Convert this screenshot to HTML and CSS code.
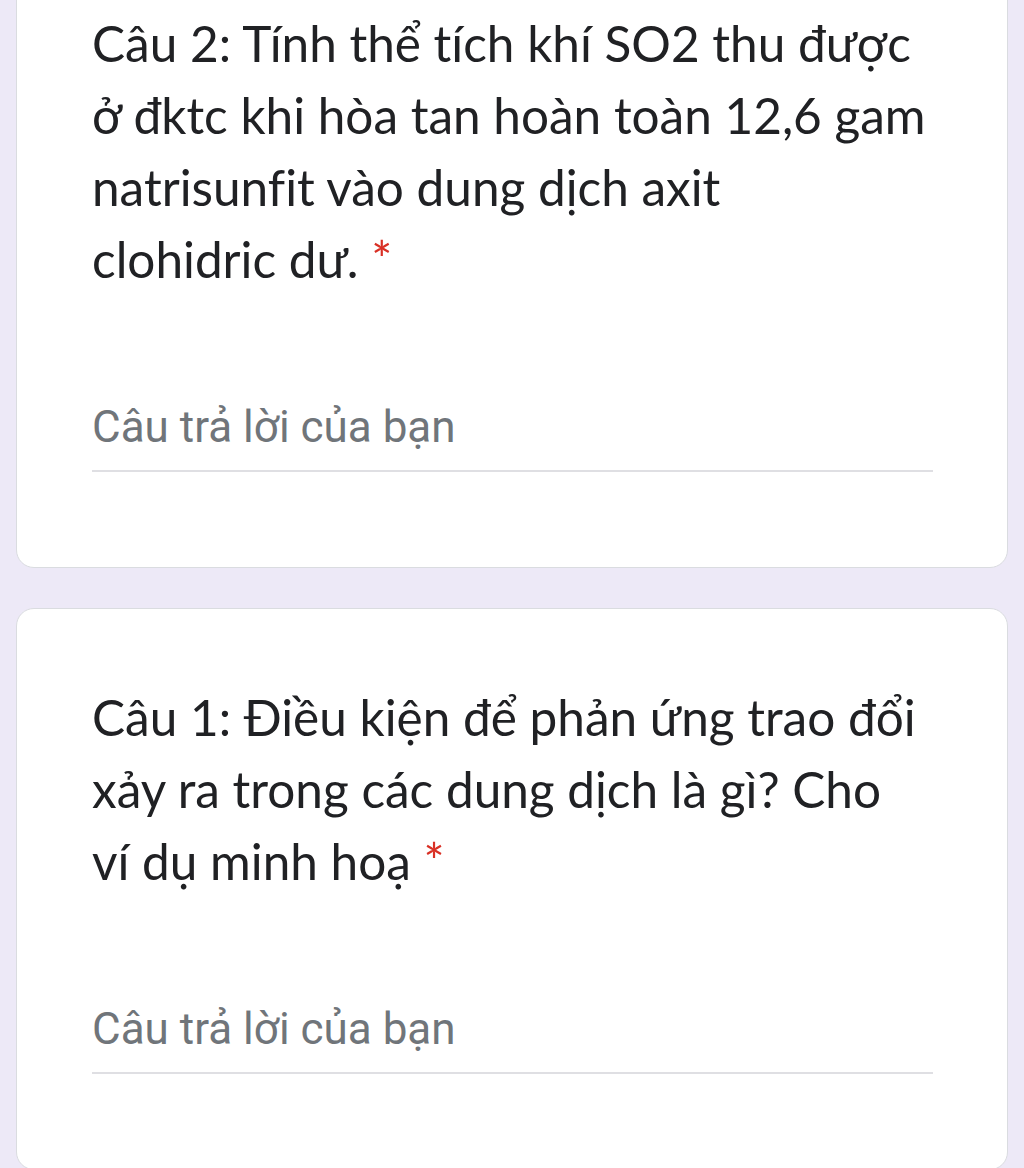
FILE: index.html
```html
<!DOCTYPE html>
<html lang="vi">
<head>
<meta charset="utf-8">
<title>Form</title>
<link rel="stylesheet" href="styles.css">
</head>
<body>
<main class="page">
  <section class="card card-first">
    <div class="question">Câu 2: Tính thể tích khí SO2 thu được<br>ở đktc khi hòa tan hoàn toàn 12,6 gam<br>natrisunfit vào dung dịch axit<br>clohidric dư. <span class="req">*</span></div>
    <div class="answer"><span class="placeholder">Câu trả lời của bạn</span></div>
  </section>
  <section class="card">
    <div class="question">Câu 1: Điều kiện để phản ứng trao đổi<br>xảy ra trong các dung dịch là gì? Cho<br>ví dụ minh hoạ <span class="req">*</span></div>
    <div class="answer"><span class="placeholder">Câu trả lời của bạn</span></div>
  </section>
</main>
</body>
</html>
```
FILE: styles.css
```css
html, body {
  margin: 0;
  padding: 0;
  background: #ede9f7;
}
.page {
  display: flex;
  flex-direction: column;
  gap: 40px;
  padding: 0 16px;
  height: 1168px;
  overflow: hidden;
}
.card {
  background: #ffffff;
  border: 1px solid #dadce0;
  border-radius: 18px;
  padding: 72px 74px 95px 75px;
  flex-shrink: 0;
}
.card-first {
  margin-top: -66px;
}
.question {
  font-family: "Lato", "Roboto", sans-serif;
  font-size: 49.5px;
  line-height: 72px;
  color: #202124;
  white-space: nowrap;
  font-variant-ligatures: none;
}
.req {
  color: #d93025;
}
.answer {
  margin-top: 101px;
  padding-bottom: 11px;
  border-bottom: 2px solid #dfdfe3;
}
.placeholder {
  display: block;
  font-family: "Roboto", sans-serif;
  font-size: 44px;
  line-height: 63px;
  color: #70757a;
}
```
